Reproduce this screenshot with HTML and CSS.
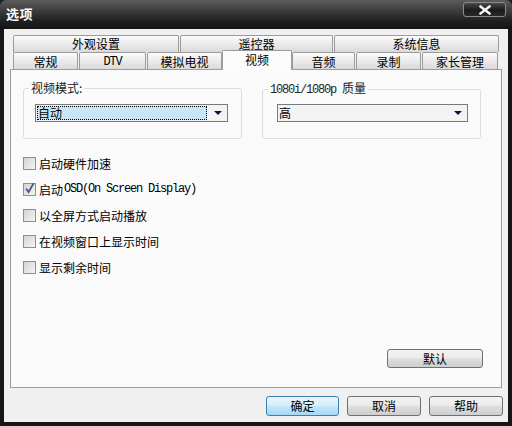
FILE: index.html
```html
<!DOCTYPE html>
<html lang="zh-CN">
<head>
<meta charset="utf-8">
<title>选项</title>
<link rel="stylesheet" href="styles.css">
</head>
<body>
<div class="window">
  <div class="titlebar">
    <span class="title">选项</span>
    <div class="close">
      <svg width="14" height="10" viewBox="0 0 14 10"><path d="M2.5 1.5 L11.5 8.5 M11.5 1.5 L2.5 8.5" stroke="#f4f4f4" stroke-width="2.4" stroke-linecap="square"/></svg>
    </div>
  </div>
  <div class="client">
    <div class="tabs">
      <div class="tabrow row1">
        <div class="tab">外观设置</div>
        <div class="tab">遥控器</div>
        <div class="tab">系统信息</div>
      </div>
      <div class="tabrow row2">
        <div class="tab t-gen">常规</div>
        <div class="tab t-dtv"><span class="lat">DTV</span></div>
        <div class="tab t-atv">模拟电视</div>
        <div class="tab t-vid selected">视频</div>
        <div class="tab t-aud">音频</div>
        <div class="tab t-rec">录制</div>
        <div class="tab t-par">家长管理</div>
      </div>
    </div>
    <div class="panel">
      <div class="groups">
        <fieldset class="group">
          <legend>视频模式:</legend>
          <div class="select focused">
            <span class="value">自动</span>
            <span class="arrow"></span>
          </div>
        </fieldset>
        <fieldset class="group">
          <legend><span class="lat">1080i/1080p </span>质量</legend>
          <div class="select quality">
            <span class="value">高</span>
            <span class="arrow"></span>
          </div>
        </fieldset>
      </div>
      <div class="checks">
        <label class="check"><span class="box"></span>启动硬件加速</label>
        <label class="check"><span class="box"><svg width="13" height="13" viewBox="0 0 13 13"><path d="M3 6.5 L5.6 10 L10.5 1.5" fill="none" stroke="#4a5a86" stroke-width="1.8"/></svg></span>启动<span class="lat tight">OSD(On Screen Display)</span></label>
        <label class="check"><span class="box"></span>以全屏方式启动播放</label>
        <label class="check"><span class="box"></span>在视频窗口上显示时间</label>
        <label class="check"><span class="box"></span>显示剩余时间</label>
      </div>
      <button class="btn default-btn">默认</button>
    </div>
    <div class="actions">
      <button class="btn primary">确定</button>
      <button class="btn">取消</button>
      <button class="btn">帮助</button>
    </div>
  </div>
</div>
</body>
</html>
```
FILE: styles.css
```css
* { box-sizing: border-box; }
html, body { margin: 0; padding: 0; background: #1b1b1b; }
body {
  font-family: "Noto Sans CJK SC", "Liberation Sans", sans-serif;
  font-size: 12px;
  color: #000;
}
.lat {
  font-family: "Liberation Mono", monospace;
  font-size: 12px;
  letter-spacing: -1.2px;
}
.lat.tight { margin-left: -2px; }
.window {
  width: 512px;
  height: 426px;
  display: flex;
  flex-direction: column;
  background: #161616;
  border-radius: 6px 6px 0 0;
  overflow: hidden;
}
.titlebar {
  height: 29px;
  flex: none;
  display: flex;
  align-items: flex-start;
  justify-content: space-between;
  padding: 0 6px 0 6px;
  background: linear-gradient(to bottom, #5c5c5c 0%, #3a3a3a 40%, #1e1e1e 75%, #141414 100%);
}
.title {
  margin-top: 6px;
  color: #fff;
  font-weight: bold;
  font-size: 13px;
  line-height: 16px;
  letter-spacing: 0.5px;
}
.close {
  margin-top: 2px;
  width: 43px;
  height: 15px;
  border: 1px solid #8a8a8a;
  border-radius: 3px;
  background: linear-gradient(to bottom, #4a4a4a, #1a1a1a 55%, #2a2a2a);
  display: flex;
  align-items: center;
  justify-content: center;
}
.client {
  flex: 1;
  margin: 0 4px 4px 4px;
  background: #f0f0f0;
  padding: 6px 5px 6px 6px;
  display: flex;
  flex-direction: column;
}
.tabs { margin-left: 3px; }
.tabrow { display: flex; }
.row1 { gap: 1px; }
.row1 .tab { padding-top: 0; }
.row1 .tab:nth-child(1) { width: 166px; }
.row1 .tab:nth-child(2) { width: 153px; }
.row1 .tab:nth-child(3) { width: 165px; }
.row2 { align-items: flex-end; height: 17px; }
.tab {
  height: 17px;
  border: 1px solid #9b9b9b;
  border-bottom: none;
  border-radius: 2px 2px 0 0;
  background: linear-gradient(to bottom, #fbfbfb 0%, #ececec 45%, #dadada 100%);
  display: flex;
  align-items: center;
  justify-content: center;
  line-height: 12px;
  padding-top: 1px;
}
.t-gen { width: 65px; margin-right: 1px; }
.t-dtv { width: 67px; margin-right: 1px; }
.t-atv { width: 75px; }
.t-vid { width: 70px; }
.t-aud { width: 63px; margin-right: 1px; }
.t-rec { width: 65px; margin-right: 1px; }
.t-par { width: 76px; }
.tab.selected {
  height: 20px;
  margin-top: -2px;
  margin-bottom: -1px;
  background: #fcfcfc;
  position: relative;
  z-index: 1;
  align-items: flex-start;
  padding-top: 3px;
}
.panel {
  flex: 1;
  margin-right: 1px;
  background: #fafafa;
  border: 1px solid #9c9c9c;
  display: flex;
  flex-direction: column;
  padding: 11px 0 0 12px;
}
.groups { display: flex; gap: 20px; }
.group {
  margin: 0;
  width: 219px;
  height: 58px;
  border: 1px solid #d8dde2;
  border-radius: 3px;
  padding: 0;
  min-width: 0;
}
.group legend {
  margin-left: 5px;
  padding: 0 2px;
  line-height: 14px;
  color: #222;
}
.select {
  margin: 9px 0 0 11px;
  width: 193px;
  height: 18px;
  border: 1px solid #7a7a7a;
  background: #f3f3f3;
  display: flex;
  align-items: stretch;
}
.select.quality {
  margin: 7px 0 0 14px;
  width: 191px;
}
.value {
  flex: 1;
  padding-left: 1px;
  line-height: 14px;
  display: flex;
  align-items: center;
}
.select.focused .value {
  margin: 1px;
  background: #c9e6f8;
  outline: 1px dotted #000;
  outline-offset: -1px;
}
.arrow {
  width: 19px;
  display: flex;
  align-items: center;
  justify-content: center;
}
.arrow::before {
  content: "";
  width: 0;
  height: 0;
  border-left: 4px solid transparent;
  border-right: 4px solid transparent;
  border-top: 4px solid #101040;
}
.checks {
  margin-top: 18px;
  display: flex;
  flex-direction: column;
  gap: 13px;
}
.check {
  height: 13px;
  display: flex;
  align-items: center;
  gap: 3px;
  line-height: 13px;
}
.box {
  width: 13px;
  height: 13px;
  flex: none;
  border: 1px solid #8e8f8f;
  background: linear-gradient(135deg, #d4d4d4, #f4f4f4);
  position: relative;
}
.box svg { position: absolute; left: -1px; top: -2px; }
.btn {
  font-family: "Noto Sans CJK SC", "Liberation Sans", sans-serif;
  font-size: 12px;
  color: #000;
  height: 19px;
  padding: 0;
  border: 1px solid #707070;
  border-radius: 3px;
  background: linear-gradient(to bottom, #f4f4f4 0%, #ebebeb 45%, #dcdcdc 55%, #cfcfcf 100%);
  line-height: 14px;
}
.default-btn {
  width: 96px;
  align-self: flex-end;
  margin-top: auto;
  margin-right: 18px;
  margin-bottom: 19px;
}
.actions {
  margin-top: 8px;
  display: flex;
  justify-content: flex-end;
  gap: 8px;
}
.actions .btn { width: 74px; height: 20px; }
.actions .btn.primary {
  width: 73px;
  border-color: #3c7fb1;
  background: linear-gradient(to bottom, #e8f5fc 0%, #d8eefb 45%, #bee6fd 55%, #a7d9f5 100%);
}
```
